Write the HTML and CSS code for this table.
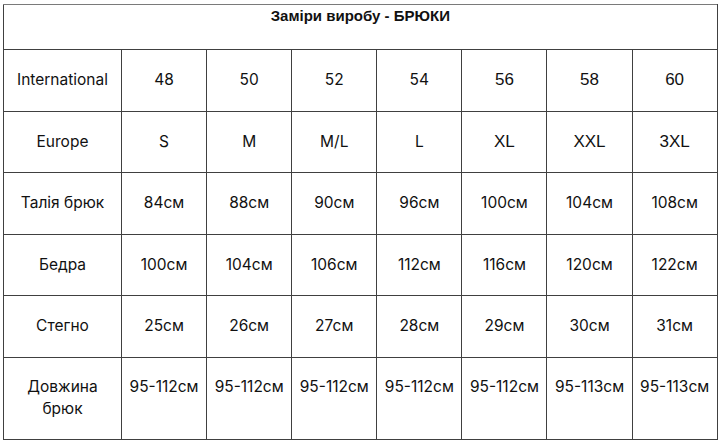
FILE: index.html
```html
<!DOCTYPE html>
<html lang="uk">
<head>
<meta charset="utf-8">
<link rel="stylesheet" href="styles.css">
</head>
<body>
<table class="sizes">
  <colgroup>
    <col class="c-label">
    <col class="c-val"><col class="c-val"><col class="c-val"><col class="c-val"><col class="c-val"><col class="c-val"><col class="c-val">
  </colgroup>
  <tr class="r-title"><td colspan="8" class="title">Заміри виробу - БРЮКИ</td></tr>
  <tr class="r">
    <td>International</td><td>48</td><td>50</td><td>52</td><td>54</td><td class="ar">56</td><td class="ar">58</td><td class="ar">60</td>
  </tr>
  <tr class="r">
    <td>Europe</td><td>S</td><td>M</td><td>M/L</td><td>L</td><td class="ar">XL</td><td class="ar">XXL</td><td class="ar">3XL</td>
  </tr>
  <tr class="r">
    <td>Талія брюк</td><td>84см</td><td>88см</td><td>90см</td><td>96см</td><td>100см</td><td>104см</td><td>108см</td>
  </tr>
  <tr class="r">
    <td>Бедра</td><td>100см</td><td>104см</td><td>106см</td><td>112см</td><td>116см</td><td>120см</td><td>122см</td>
  </tr>
  <tr class="r">
    <td>Стегно</td><td>25см</td><td>26см</td><td>27см</td><td>28см</td><td>29см</td><td>30см</td><td>31см</td>
  </tr>
  <tr class="r-last">
    <td class="two">Довжина<br>брюк</td><td>95-112см</td><td>95-112см</td><td>95-112см</td><td>95-112см</td><td>95-112см</td><td>95-113см</td><td>95-113см</td>
  </tr>
</table>
</body>
</html>
```

FILE: styles.css
```css
html, body {
  margin: 0;
  padding: 0;
  background: #ffffff;
}
body {
  padding: 4px 3px 0 3px;
}
.sizes {
  border-collapse: collapse;
  table-layout: fixed;
  width: 714px;
  font-family: Inter, "Open Sans", "Liberation Sans", sans-serif;
  font-size: 15.5px;
  color: #111111;
}
.c-label { width: 118px; }
.c-val { width: 85.1px; }
.sizes td {
  border: 1px solid #404040;
  text-align: center;
  vertical-align: middle;
  padding: 0;
  line-height: 22px;
}
.sizes .title {
  border-top-color: #7a7a7a;
  font-family: "Liberation Sans", Arial, sans-serif;
  font-weight: bold;
  font-size: 15px;
  line-height: 18px;
  vertical-align: top;
  padding-top: 2px;
}
.r-title { height: 45px; }
.r { height: 61.5px; }
.r-last { height: 82px; }
.r-last td {
  vertical-align: top;
  padding-top: 18px;
}
.r-last td.two {
  vertical-align: middle;
  padding-top: 0;
}
.sizes td.ar {
  font-family: "Liberation Sans", Arial, sans-serif;
  font-size: 17px;
}
```
